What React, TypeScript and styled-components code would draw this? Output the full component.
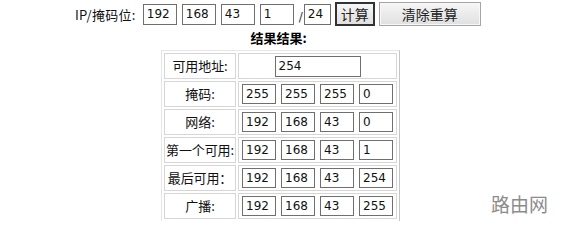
import styled, { createGlobalStyle } from "styled-components";

const GlobalStyle = createGlobalStyle`
  html, body {
    margin: 0;
    padding: 0;
    background: #ffffff;
  }
  body {
    font-family: "DejaVu Sans", "Noto Sans CJK SC", sans-serif;
    font-size: 12px;
    color: #000;
  }
`;

const Page = styled.div`
  position: relative;
  width: 567px;
  height: 221px;
  overflow: hidden;
  padding-top: 3px;
  box-sizing: border-box;
`;

const InputRow = styled.div`
  display: flex;
  align-items: center;
  padding-left: 75px;
  height: 22px;
`;

const Label = styled.span`
  font-family: "Noto Sans CJK SC", sans-serif;
  font-size: 13px;
  letter-spacing: 0.3px;
  margin-right: 7px;
  color: #111;
`;

const Box = styled.input<{ $w: number; $h: number; $gap?: number }>`
  box-sizing: border-box;
  width: ${(p) => p.$w}px;
  height: ${(p) => p.$h}px;
  margin: 0 0 0 ${(p) => p.$gap ?? 0}px;
  border: 1px solid #6f6f6f;
  padding: 0 3px;
  font-family: "DejaVu Sans", sans-serif;
  font-size: 12px;
  color: #111;
  background: #fff;
  outline: none;
  flex: none;
`;

const Slash = styled.span`
  font-size: 12px;
  margin: 0 1px 0 5px;
  color: #333;
  align-self: flex-end;
  padding-bottom: 1px;
`;

const Btn = styled.button<{ $primary?: boolean; $w: number }>`
  box-sizing: border-box;
  width: ${(p) => p.$w}px;
  height: 24px;
  margin-left: 4px;
  padding: 0;
  font-family: "Noto Sans CJK SC", sans-serif;
  font-size: 14px;
  color: #222;
  background: linear-gradient(180deg, #f6f6f6 0%, #e0e0e0 100%);
  border: ${(p) => (p.$primary ? "2px solid #333" : "1px solid #a5a5a5")};
  box-shadow: ${(p) => (p.$primary ? "none" : "inset 0 0 0 1px #f8f8f8")};
`;

const Title = styled.div`
  font-family: "Noto Sans CJK SC", sans-serif;
  font-weight: bold;
  font-size: 13px;
  text-align: center;
  height: 25px;
  line-height: 26px;
  width: 557px;
`;

const Table = styled.table`
  margin-left: 161px;
  border-collapse: separate;
  border-spacing: 2px;
  border: 1px solid #e6e6e6;
  border-right-color: #c4c4c4;
  border-bottom-color: #c4c4c4;
`;

const LabelCell = styled.td`
  box-sizing: border-box;
  width: 72px;
  height: 26px;
  padding: 0;
  text-align: center;
  vertical-align: middle;
  font-family: "Noto Sans CJK SC", sans-serif;
  font-size: 13px;
  line-height: 16px;
  color: #111;
  border: 1px solid #d6d6d6;
  white-space: nowrap;
  letter-spacing: -0.1px;
`;

const ValueCell = styled.td`
  box-sizing: border-box;
  width: 159px;
  height: 26px;
  padding: 0 3px;
  border: 1px solid #d6d6d6;
  vertical-align: middle;
  line-height: 0;
`;

const Octets = styled.div<{ $center?: boolean }>`
  display: flex;
  align-items: center;
  justify-content: ${(p) => (p.$center ? "center" : "flex-start")};
  gap: 5px;
`;

const Watermark = styled.div`
  position: absolute;
  right: 19px;
  bottom: 4px;
  font-family: "Noto Sans CJK SC", sans-serif;
  font-size: 19px;
  color: #8c8c8c;
`;

const rows: { label: string; values: string[] }[] = [
  { label: "掩码:", values: ["255", "255", "255", "0"] },
  { label: "网络:", values: ["192", "168", "43", "0"] },
  { label: "第一个可用:", values: ["192", "168", "43", "1"] },
  { label: "最后可用：", values: ["192", "168", "43", "254"] },
  { label: "广播:", values: ["192", "168", "43", "255"] },
];

export default function App() {
  return (
    <Page>
      <GlobalStyle />
      <InputRow>
        <Label>IP/掩码位:</Label>
        <Box $w={34} $h={21} defaultValue="192" />
        <Box $w={34} $h={21} $gap={5} defaultValue="168" />
        <Box $w={34} $h={21} $gap={5} defaultValue="43" />
        <Box $w={34} $h={21} $gap={5} defaultValue="1" />
        <Slash>/</Slash>
        <Box $w={27} $h={21} defaultValue="24" />
        <Btn $primary $w={40}>计算</Btn>
        <Btn $w={102}>清除重算</Btn>
      </InputRow>
      <Title>结果结果:</Title>
      <Table>
        <tbody>
          <tr>
            <LabelCell>可用地址:</LabelCell>
            <ValueCell>
              <Octets $center>
                <Box $w={86} $h={21} defaultValue="254" />
              </Octets>
            </ValueCell>
          </tr>
          {rows.map((r) => (
            <tr key={r.label}>
              <LabelCell>{r.label}</LabelCell>
              <ValueCell>
                <Octets>
                  {r.values.map((v, i) => (
                    <Box key={i} $w={34} $h={20} defaultValue={v} />
                  ))}
                </Octets>
              </ValueCell>
            </tr>
          ))}
        </tbody>
      </Table>
      <Watermark>路由网</Watermark>
    </Page>
  );
}
